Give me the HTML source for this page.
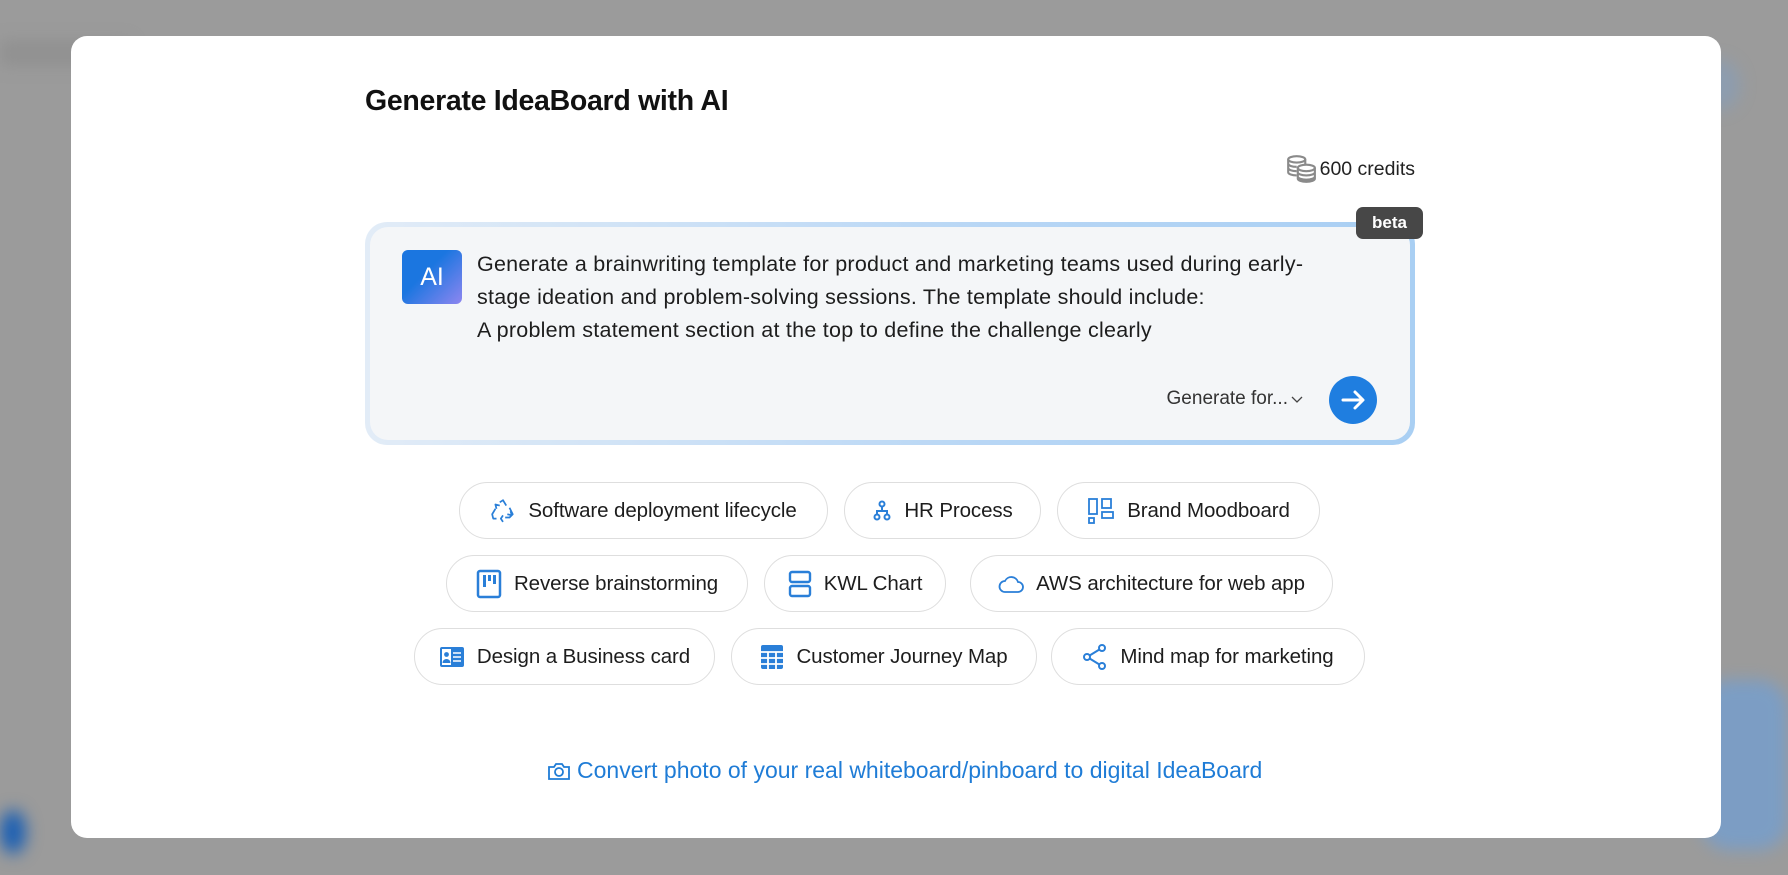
<!DOCTYPE html>
<html><head><meta charset="utf-8"><style>
*{box-sizing:border-box;margin:0;padding:0}
body{width:1788px;height:875px;overflow:hidden;background:#9b9b9b;font-family:"Liberation Sans",sans-serif;position:relative}
.blob{position:absolute;filter:blur(8px)}
.modal{position:absolute;left:71px;top:36px;width:1650px;height:802px;background:#fff;border-radius:16px}
.title{position:absolute;left:365px;top:85px;font-size:28.5px;font-weight:bold;color:#111;letter-spacing:-0.3px}
.credits{position:absolute;right:373px;top:154px;font-size:19.5px;color:#222;display:flex;align-items:center;gap:3px}
.box{position:absolute;left:365px;top:222px;width:1050px;height:223px;border-radius:22px;background:linear-gradient(90deg,#e2ecf7,#b7d6f5 60%,#a9cff3);padding:5px}
.inner{width:100%;height:100%;border-radius:18px;background:#f4f6f8;position:relative}
.beta{position:absolute;left:1356px;top:207px;width:67px;height:32px;background:#474747;color:#fff;border-radius:7px;font-size:17px;text-align:center;line-height:32px;font-weight:bold}
.ai{position:absolute;left:32px;top:23px;width:60px;height:54px;border-radius:6px;background:linear-gradient(135deg,#1b76e0 40%,#8e86f0);color:#fff;font-size:25px;text-align:center;line-height:54px}
.txt{position:absolute;left:107px;top:21px;font-size:21.5px;line-height:33px;color:#1d1d1d;white-space:nowrap;letter-spacing:0.25px}
.gen{position:absolute;right:106px;top:161px;font-size:19px;color:#333}
.go{position:absolute;right:33px;top:149px;width:48px;height:48px;border-radius:50%;background:#1f7ee0}
.chip{position:absolute;height:57px;border:1.5px solid #dedede;border-radius:29px;display:flex;align-items:center;justify-content:center;gap:12px;font-size:20.5px;color:#1d1d1d;background:#fff;letter-spacing:-0.1px}
.chip svg{flex:none}
.link{position:absolute;left:547px;top:757px;font-size:23px;color:#1f7cd6;display:flex;align-items:center;gap:6px;letter-spacing:0}
</style></head><body>
<div class="blob" style="left:0;top:40px;width:130px;height:26px;background:#8a8a8a;opacity:.6"></div>
<div class="blob" style="left:0;top:810px;width:26px;height:44px;background:#1b5fb3;border-radius:50%"></div>
<div class="blob" style="left:1700px;top:680px;width:88px;height:170px;background:#6f9fd6;border-radius:30px;opacity:.7"></div>
<div class="blob" style="left:1700px;top:60px;width:40px;height:50px;background:#7f9fc4;border-radius:50%;opacity:.5"></div>
<div class="modal"></div>
<div class="title">Generate IdeaBoard with AI</div>
<div class="credits"><svg width="32" height="30" viewBox="0 0 30 28" fill="none" stroke="#8a8a8a" stroke-width="2"><ellipse cx="11" cy="5" rx="8" ry="3"/><path d="M3 5v12c0 1.7 3.6 3 8 3M3 9c0 1.7 3.6 3 8 3M3 13c0 1.7 3.6 3 8 3M19 5v5"/><ellipse cx="20" cy="13" rx="8" ry="3"/><path d="M12 13v10c0 1.7 3.6 3 8 3s8-1.3 8-3V13M12 17c0 1.7 3.6 3 8 3s8-1.3 8-3M12 21c0 1.7 3.6 3 8 3s8-1.3 8-3"/></svg>600 credits</div>
<div class="box"><div class="inner">
<div class="ai">AI</div>
<div class="txt">Generate a brainwriting template for product and marketing teams used during early-<br>stage ideation and problem-solving sessions. The template should include:<br>A problem statement section at the top to define the challenge clearly</div>
<div class="gen">Generate for...<svg width="14" height="10" viewBox="0 0 14 10" style="margin-left:2px"><path d="M2 3l5 5 5-5" fill="none" stroke="#444" stroke-width="1.3"/></svg></div>
<div class="go"><svg width="48" height="48" viewBox="0 0 48 48"><path d="M14 24h19M26 16l8 8-8 8" fill="none" stroke="#fff" stroke-width="3" stroke-linecap="round" stroke-linejoin="round"/></svg></div>
</div></div>
<div class="beta">beta</div>

<div class="chip" style="left:459px;top:482px;width:369px"><svg width="26" height="26" viewBox="0 0 24 24" fill="none" stroke="#2a7fd8" stroke-width="1.6" stroke-linejoin="round"><path d="M9 4l3-2 3 5M18 9l3 6-3 3h-4M6 19H3l-1-4 3-5M12 22l-2-3 2-3M6 10l-1-4 4 1M19 12l1 4-4-1" /></svg>Software deployment lifecycle</div>
<div class="chip" style="left:844px;top:482px;width:197px"><svg width="20" height="22" viewBox="0 0 20 22" fill="none" stroke="#2a7fd8" stroke-width="2"><circle cx="10" cy="4" r="2.5"/><circle cx="5" cy="17" r="2.5"/><circle cx="15" cy="17" r="2.5"/><path d="M10 7v4M5 14v-3h10v3"/></svg>HR Process</div>
<div class="chip" style="left:1057px;top:482px;width:263px"><svg width="28" height="28" viewBox="0 0 28 28" fill="none" stroke="#2a7fd8" stroke-width="1.8"><rect x="2" y="2" width="8" height="15"/><rect x="15" y="2" width="9" height="9"/><rect x="15" y="15" width="11" height="6"/><rect x="2" y="21" width="5" height="5"/></svg>Brand Moodboard</div>

<div class="chip" style="left:446px;top:555px;width:302px"><svg width="26" height="30" viewBox="0 0 26 30"><rect x="2" y="2" width="22" height="26" rx="2" fill="none" stroke="#2a7fd8" stroke-width="2.5"/><rect x="7" y="6" width="3" height="12" fill="#2a7fd8"/><rect x="12" y="6" width="3" height="6" fill="#2a7fd8"/><rect x="17" y="6" width="3" height="9" fill="#2a7fd8"/></svg>Reverse brainstorming</div>
<div class="chip" style="left:764px;top:555px;width:182px"><svg width="24" height="28" viewBox="0 0 24 28" fill="none" stroke="#2a7fd8" stroke-width="2.4"><rect x="2" y="2" width="20" height="10" rx="2"/><rect x="2" y="16" width="20" height="10" rx="2"/></svg>KWL Chart</div>
<div class="chip" style="left:970px;top:555px;width:363px"><svg width="26" height="20" viewBox="0 0 26 20" fill="none" stroke="#2a7fd8" stroke-width="1.8"><path d="M7 18h13a5 5 0 0 0 0-10 7 7 0 0 0-13-1 5.5 5.5 0 0 0 0 11z"/></svg>AWS architecture for web app</div>

<div class="chip" style="left:414px;top:628px;width:301px"><svg width="26" height="22" viewBox="0 0 26 22"><rect x="1" y="1" width="24" height="20" rx="2" fill="#2a7fd8"/><rect x="3" y="3" width="9" height="16" fill="#fff"/><circle cx="7.5" cy="8.5" r="2.4" fill="#2a7fd8"/><path d="M3.5 17a4 4 0 0 1 8 0z" fill="#2a7fd8"/><path d="M14 7h8M14 11h8M14 15h8" stroke="#fff" stroke-width="1.6"/></svg>Design a Business card</div>
<div class="chip" style="left:731px;top:628px;width:306px"><svg width="24" height="26" viewBox="0 0 24 26"><rect x="1" y="1" width="22" height="24" rx="2" fill="#2a7fd8"/><path d="M1 8h22M1 14h22M1 20h22M8 8v17M16 8v17" stroke="#fff" stroke-width="1.8"/></svg>Customer Journey Map</div>
<div class="chip" style="left:1051px;top:628px;width:314px"><svg width="26" height="28" viewBox="0 0 26 28" fill="none" stroke="#2a7fd8" stroke-width="2"><circle cx="20" cy="5" r="3"/><circle cx="5" cy="14" r="3"/><circle cx="20" cy="23" r="3"/><path d="M7.6 12.5l9.8-6M7.6 15.5l9.8 6"/></svg>Mind map for marketing</div>

<div class="link"><svg width="24" height="20" viewBox="0 0 24 20" fill="none" stroke="#1f7cd6" stroke-width="1.8"><path d="M2 6h5l2-3h6l2 3h5v12H2z"/><circle cx="12" cy="11" r="4"/></svg>Convert photo of your real whiteboard/pinboard to digital IdeaBoard</div>
</body></html>
